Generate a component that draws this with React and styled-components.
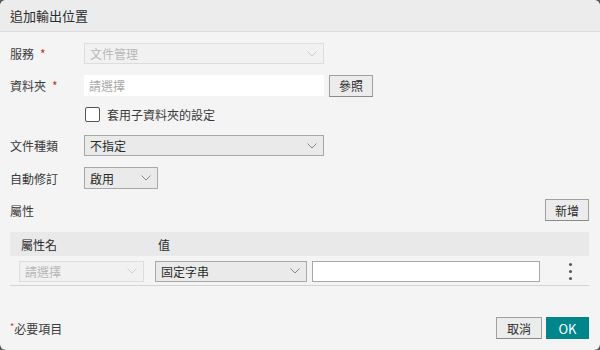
import React from "react";
import styled, { createGlobalStyle } from "styled-components";

const Global = createGlobalStyle`
  html, body { margin: 0; padding: 0; background: #5a5a5a; }
  body { font-family: "Noto Sans CJK TC", "Noto Sans", sans-serif; }
`;

// dialog

const Dialog = styled.div`
  width: 600px;
  height: 350px;
  background: #f4f4f4;
  border-radius: 6px;
  overflow: hidden;
  display: flex;
  flex-direction: column;
  color: #3a3a3a;
  font-size: 12px;
`;

const Header = styled.div`
  height: 31px;
  flex: none;
  background: #ececec;
  border-bottom: 1px solid #dcdcdc;
  display: flex;
  align-items: center;
  padding-left: 10px;
  font-size: 13px;
  color: #2a2a2a;
`;

const Body = styled.div`
  flex: 1;
  padding: 10px 11px 0 10px;
  display: flex;
  flex-direction: column;
`;

const Row = styled.div`
  display: flex;
  align-items: center;
  height: ${(p) => p.h || 21}px;
  margin-top: ${(p) => p.mt || 0}px;
  justify-content: ${(p) => (p.spread ? "space-between" : "flex-start")};
`;

const Label = styled.div`
  width: 74px;
  flex: none;
`;

const Req = styled.span`
  color: #c8302e;
  margin-left: 6px;
`;

const Select = styled.div`
  box-sizing: border-box;
  width: ${(p) => p.w}px;
  height: ${(p) => p.h || 21}px;
  margin-left: ${(p) => p.ml || 0}px;
  display: flex;
  align-items: center;
  justify-content: space-between;
  padding: 0 6px 0 5px;
  background: ${(p) => (p.disabled ? "#f1f1f1" : "#eaeaea")};
  border: 1px solid ${(p) => (p.disabled ? "#dddddd" : "#a8a8a8")};
  color: ${(p) => (p.disabled ? "#b8b8b8" : "#2a2a2a")};
  flex: none;
`;

const Chevron = ({ color }) => (
  <svg width="10" height="6" viewBox="0 0 10 6">
    <path d="M0.5 0.5 L5 5 L9.5 0.5" fill="none" stroke={color} strokeWidth="1" />
  </svg>
);

const TextInput = styled.div`
  box-sizing: border-box;
  width: ${(p) => p.w}px;
  height: 21px;
  margin-left: ${(p) => p.ml || 0}px;
  background: #fff;
  border: ${(p) => (p.bordered ? "1px solid #a8a8a8" : "none")};
  display: flex;
  align-items: center;
  padding-left: 5px;
  color: #aaa;
  flex: none;
`;

const Button = styled.div`
  box-sizing: border-box;
  width: ${(p) => p.w || 44}px;
  height: 22px;
  margin-left: ${(p) => p.ml || 0}px;
  display: flex;
  align-items: center;
  justify-content: center;
  background: ${(p) => (p.primary ? "#00858a" : "#ececec")};
  color: ${(p) => (p.primary ? "#fff" : "#2a2a2a")};
  border: 1px solid ${(p) => (p.primary ? "#00858a" : "#a0a0a0")};
  border-bottom-color: ${(p) => (p.primary ? "#00858a" : "#8a8a8a")};
  flex: none;
  font-size: ${(p) => (p.primary ? 13 : 12)}px;
`;

const Check = styled.div`
  box-sizing: border-box;
  width: 15px;
  height: 15px;
  border: 1px solid #555;
  background: #fff;
  border-radius: 2px;
  margin-left: 75px;
  margin-right: 7px;
`;

const TableHead = styled.div`
  display: flex;
  align-items: center;
  height: 24px;
  background: #e9e9e9;
  margin-top: 11px;
  color: #2a2a2a;
`;

const Col = styled.div`
  width: ${(p) => p.w}px;
  padding-left: ${(p) => p.pl || 0}px;
  flex: none;
`;

const TableRow = styled.div`
  display: flex;
  align-items: center;
  height: 28px;
  border-bottom: 1px solid #d4d4d4;
  padding-top: 1px;
`;

const Kebab = styled.div`
  display: flex;
  flex-direction: column;
  gap: 4px;
  margin-left: 29px;
  span {
    width: 3px;
    height: 3px;
    border-radius: 50%;
    background: #555;
  }
`;

const Footer = styled.div`
  height: 44px;
  flex: none;
  display: flex;
  align-items: center;
  justify-content: space-between;
  padding: 0 11px 0 10px;
`;

const Note = styled.div`
  span { color: #c8302e; font-size: 9px; vertical-align: top; }
`;

const Buttons = styled.div`
  display: flex;
  gap: 4px;
`;

export default function App() {
  return (
    <>
      <Global />
      <Dialog>
        <Header>追加輸出位置</Header>
        <Body>
          <Row mt={1}>
            <Label>服務<Req>*</Req></Label>
            <Select w={240} disabled>
              文件管理 <Chevron color="#cfcfcf" />
            </Select>
          </Row>
          <Row mt={11}>
            <Label>資料夾<Req>*</Req></Label>
            <TextInput w={240}>請選擇</TextInput>
            <Button ml={5}>參照</Button>
          </Row>
          <Row mt={10} h={16}>
            <Check />
            套用子資料夾的設定
          </Row>
          <Row mt={13}>
            <Label>文件種類</Label>
            <Select w={240}>
              不指定 <Chevron color="#888" />
            </Select>
          </Row>
          <Row mt={11} h={22}>
            <Label>自動修訂</Label>
            <Select w={74} h={22}>
              啟用 <Chevron color="#888" />
            </Select>
          </Row>
          <Row mt={10} h={22} spread>
            <Label>屬性</Label>
            <Button>新增</Button>
          </Row>
          <TableHead>
            <Col w={137} pl={11}>屬性名</Col>
            <Col w={100}>值</Col>
          </TableHead>
          <TableRow>
            <Select w={125} ml={9} disabled>
              請選擇 <Chevron color="#d0d0d0" />
            </Select>
            <Select w={152} ml={11}>
              固定字串 <Chevron color="#888" />
            </Select>
            <TextInput w={228} ml={5} bordered />
            <Kebab><span /><span /><span /></Kebab>
          </TableRow>
        </Body>
        <Footer>
          <Note><span>*</span>必要項目</Note>
          <Buttons>
            <Button w={46}>取消</Button>
            <Button w={43} primary>OK</Button>
          </Buttons>
        </Footer>
      </Dialog>
    </>
  );
}
